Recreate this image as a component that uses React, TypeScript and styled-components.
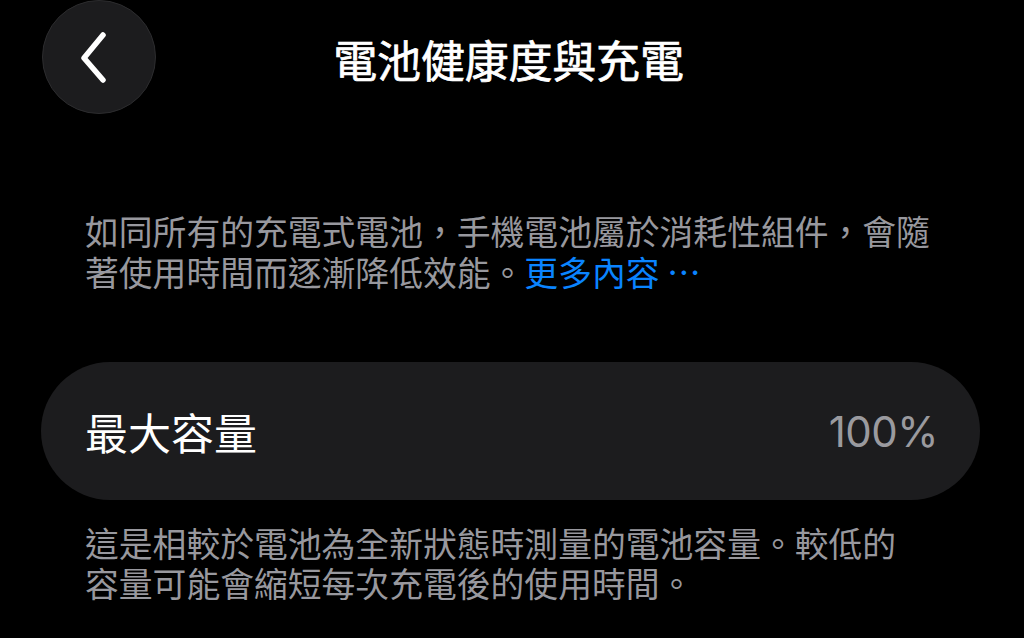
import React from "react";
import styled, { createGlobalStyle } from "styled-components";

const Global = createGlobalStyle`
  html, body { margin: 0; padding: 0; background: #000; }
  body { font-family: "Noto Sans CJK TC", "Noto Sans", sans-serif; -webkit-font-smoothing: antialiased; }
  * { box-sizing: border-box; }
`;

const Page = styled.div`
  width: 1024px;
  height: 638px;
  overflow: hidden;
  background: #000;
  color: #fff;
  padding: 0 44px 0 41px;
  display: flex;
  flex-direction: column;
`;

const Header = styled.header`
  position: relative;
  height: 116px;
  display: flex;
  align-items: center;
  justify-content: center;
`;

const BackButton = styled.button`
  position: absolute;
  left: 1px;
  top: 0px;
  width: 114px;
  height: 114px;
  border-radius: 50%;
  background: #1c1c1e;
  border: 1px solid #2c2c2e;
  display: flex;
  align-items: center;
  justify-content: center;
  padding: 0;
  cursor: pointer;
`;

const Title = styled.h1`
  margin: 0;
  margin-left: -4px;
  margin-top: 2px;
  font-size: 44px;
  font-weight: 400;
  -webkit-text-stroke: 0.7px #fff;
  letter-spacing: -0.2px;
  line-height: 1;
  color: #fff;
`;

const Text = styled.p<{ $width: number }>`
  margin: 0;
  padding-left: 44px;
  width: ${(p) => p.$width}px;
  font-size: 33.8px;
  line-height: 41px;
  color: #98989e;
  font-weight: 400;
`;

const Intro = styled(Text)`
  margin-top: 94px;
`;

const Link = styled.a`
  display: inline-block;
  line-height: 41px;
  color: #0a84ff;
  text-decoration: none;
`;

const Card = styled.div`
  margin-top: 70px;
  height: 138px;
  border-radius: 69px;
  background: #1c1c1e;
  display: flex;
  align-items: center;
  justify-content: space-between;
  padding: 0 42px 0 44px;
`;

const Label = styled.span`
  font-size: 43px;
  font-weight: 400;
  color: #fff;
`;

const Value = styled.span`
  font-family: "Inter", "Noto Sans", sans-serif;
  font-size: 42px;
  font-weight: 400;
  color: #9a9a9f;
  letter-spacing: -0.5px;
`;

const Footnote = styled(Text)`
  margin-top: 23px;
  line-height: 40px;
`;

export default function App() {
  return (
    <>
      <Global />
      <Page>
        <Header>
          <BackButton aria-label="返回">
            <svg width="40" height="52" viewBox="0 0 40 52" fill="none">
              <path
                d="M26 4 L7 27 L26 49"
                stroke="#fff"
                strokeWidth="5.5"
                strokeLinecap="round"
                strokeLinejoin="round"
                transform="translate(-2 0)"
              />
            </svg>
          </BackButton>
          <Title>電池健康度與充電</Title>
        </Header>
        <Intro $width={905}>
          如同所有的充電式電池，手機電池屬於消耗性組件，會隨著使用時間而逐漸降低效能。<Link href="#">更多內容 …</Link>
        </Intro>
        <Card>
          <Label>最大容量</Label>
          <Value>100%</Value>
        </Card>
        <Footnote $width={880}>
          這是相較於電池為全新狀態時測量的電池容量。較低的容量可能會縮短每次充電後的使用時間。
        </Footnote>
      </Page>
    </>
  );
}
